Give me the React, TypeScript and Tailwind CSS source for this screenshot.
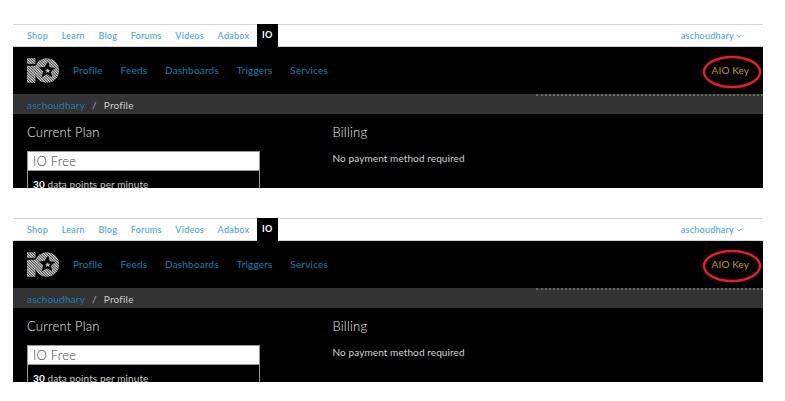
import React from 'react';

const shopLinks = ['Shop', 'Learn', 'Blog', 'Forums', 'Videos', 'Adabox'];
const ioLinks = ['Profile', 'Feeds', 'Dashboards', 'Triggers', 'Services'];

const Logo = ({ id }: { id: string }) => (
  <svg width="33" height="25" viewBox="0 0 35 26" className="block">
    <defs>
      <pattern id={id} width="2" height="2" patternUnits="userSpaceOnUse" patternTransform="rotate(45)">
        <rect width="2" height="2" fill="#333" />
        <rect width="2" height="1.1" fill="#ddd" />
      </pattern>
    </defs>
    <rect x="0" y="0" width="9" height="6" fill={`url(#${id})`} />
    <rect x="0" y="8" width="9" height="18" fill={`url(#${id})`} />
    <circle cx="21" cy="13" r="13" fill={`url(#${id})`} />
    <path d="M22.5 3.5l1.6 6.1 6.2.7-5 3.8 1.5 6.3-5.6-3.4-5.7 3.1 1.7-6.2-4.8-4.2 6.4-.3z" fill="#000" />
    <path d="M22 10.5l.8 1.8 1.9.2-1.4 1.2.4 1.9-1.7-1-1.7 1 .4-1.9-1.4-1.2 1.9-.2z" fill="#bbb" />
  </svg>
);

const Panel = ({ id }: { id: string }) => (
  <div className="w-[750px] h-[164px] overflow-hidden bg-black">
    <div className="h-[23px] bg-white border-t border-b border-[#d4d4d4] flex items-center justify-between pl-[14px] pr-[21px] text-[9px] tracking-[0.25px] font-medium text-[#45a6e0]">
      <div className="flex items-center gap-[13.6px]">
        {shopLinks.map(link => <a key={link}>{link}</a>)}
        <a className="-mt-px h-[23px] w-[21px] bg-black text-white font-bold flex items-center justify-center -ml-[6px]">IO</a>
      </div>
      <a className="flex items-center gap-[2px]">
        aschoudhary
        <svg width="6" height="4" viewBox="0 0 6 4" fill="none" stroke="#45a6e0" strokeWidth="0.8"><path d="M.5.7L3 3.2 5.5.7" /></svg>
      </a>
    </div>
    <div className="relative h-[47px] bg-black flex items-center justify-between pl-[14px] pr-[14px]">
      <div className="flex items-center">
        <Logo id={id} />
        <div className="ml-[13px] -mt-[1px] flex items-center gap-[17.7px] text-[10px] tracking-[0.2px] text-[#1080b8]">
          {ioLinks.map(link => <a key={link}>{link}</a>)}
        </div>
      </div>
      <a className="text-[10px] tracking-[0.1px] text-[#c49a0a]">AIO Key</a>
      <svg width="60" height="34" viewBox="0 0 60 34" fill="none" className="absolute right-[1px] top-[8px]">
        <ellipse cx="30" cy="17" rx="28" ry="15" stroke="#ed1c24" strokeWidth="2.4" />
      </svg>
    </div>
    <div className="relative h-[20px] bg-[#333] flex items-center pl-[14px] pt-[2px] text-[10px] tracking-[0.2px]">
      <div className="absolute right-0 top-0 w-[227px] border-t-2 border-dotted border-[#666]" />
      <a className="text-[#1d7fb5]">aschoudhary</a>
      <span className="mx-[7px] text-[#aaa]">/</span>
      <span className="font-normal text-[#ccc]">Profile</span>
    </div>
    <div className="flex pl-[14px] pt-[10px] text-white">
      <div className="w-[305.5px]">
        <h2 className="text-[13px] font-light leading-[16px] tracking-[0.2px] text-[#eee]">Current Plan</h2>
        <div className="mt-[11px] w-[233px] border border-[#999]">
          <div className="h-[18px] bg-white pl-[5px] text-[13px] font-light leading-[18px] tracking-[0.2px] text-[#444]">IO Free</div>
          <div className="border-t border-[#999] pl-[5px] pt-[6px] text-[10px] leading-[14px] tracking-[0.1px] text-[#ccc]">
            <b className="text-white">30</b> data points per minute
          </div>
        </div>
      </div>
      <div>
        <h2 className="text-[13px] font-light leading-[16px] tracking-[0.2px] text-[#eee]">Billing</h2>
        <p className="mt-[11px] text-[10px] leading-[14px] tracking-[0.1px] text-[#d4d4d4]">No payment method required</p>
      </div>
    </div>
  </div>
);

export default function App() {
  return (
    <div className="w-[785px] h-[401px] bg-white pt-[24px] pl-[13px] flex flex-col gap-[30px] font-['Lato',sans-serif] overflow-hidden">
      <Panel id="hatch-a" />
      <Panel id="hatch-b" />
    </div>
  );
}
